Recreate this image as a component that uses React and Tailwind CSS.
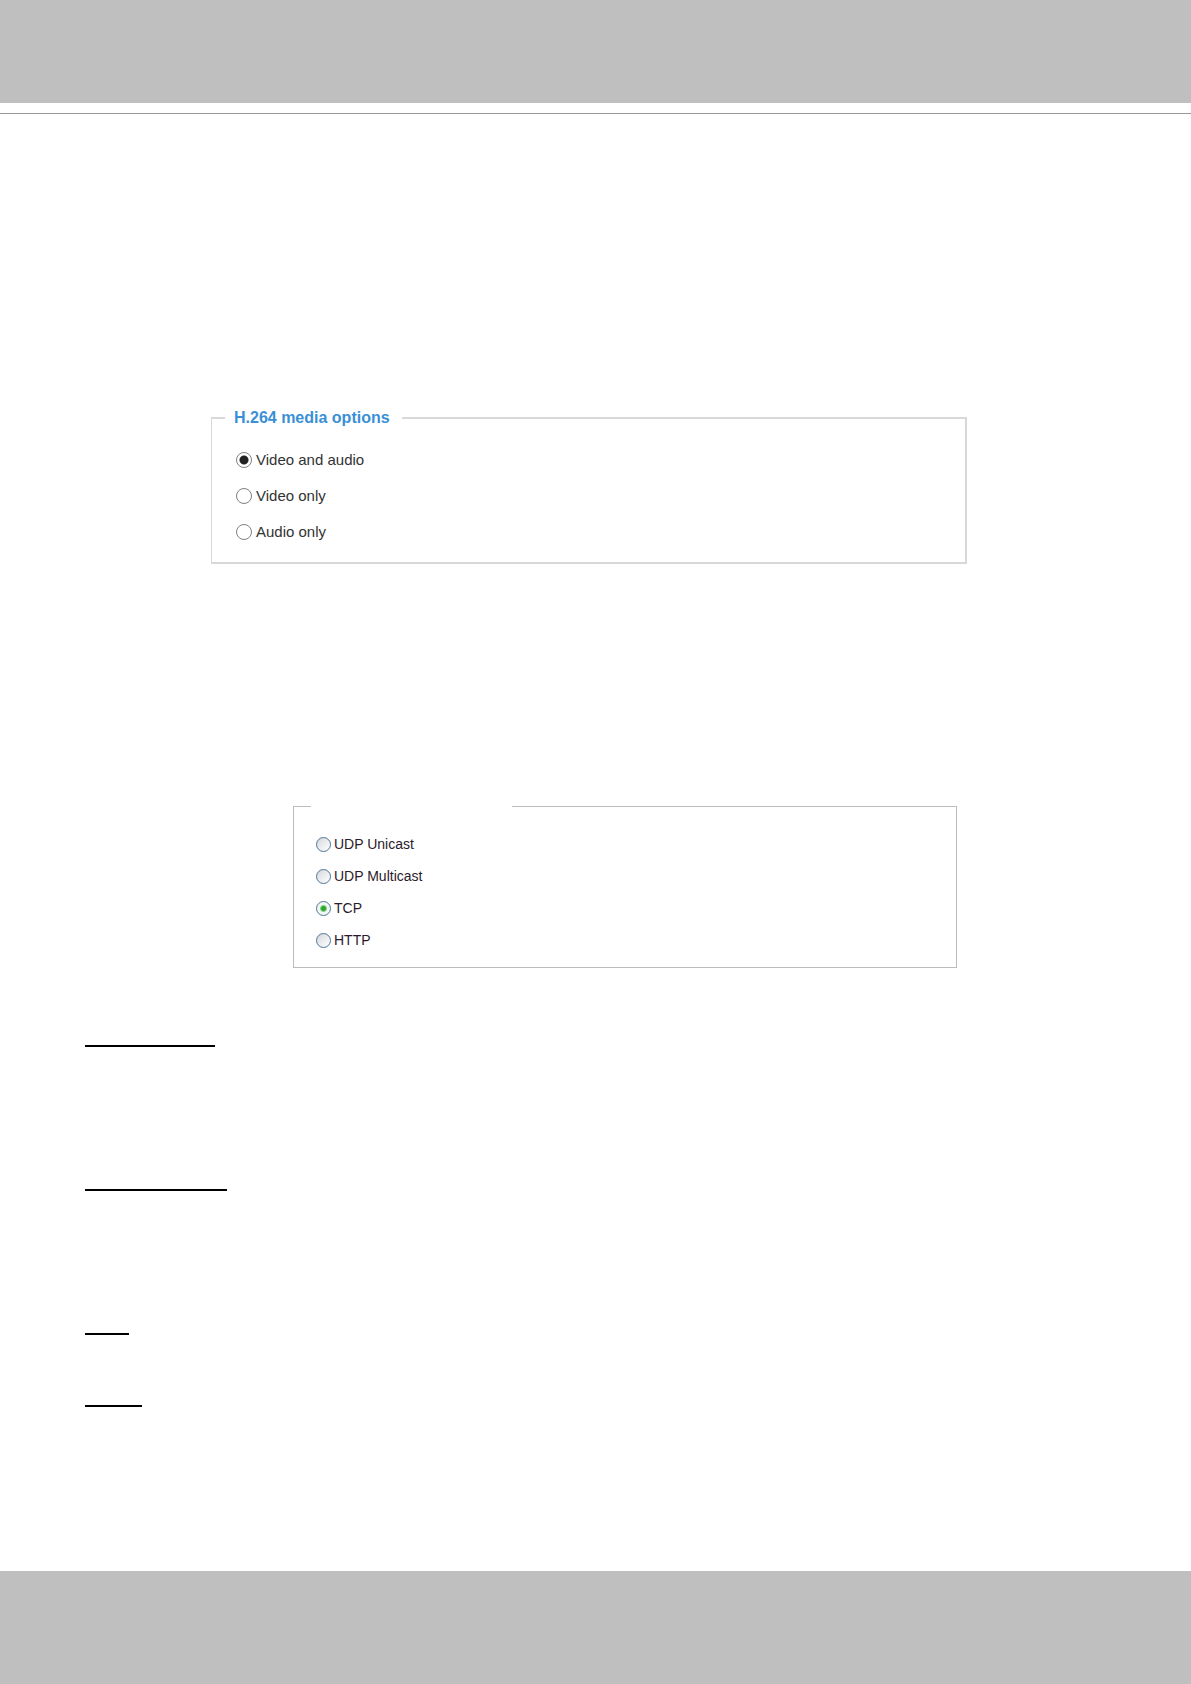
import React from "react";

const mediaOptions = ["Video and audio", "Video only", "Audio only"];
const protocols = ["UDP Unicast", "UDP Multicast", "TCP", "HTTP"];

function MediaOptions() {
  const [media, setMedia] = React.useState("Video and audio");

  return (
    <fieldset className="ml-[211px] mr-[224px] border-2 border-l border-[#d8d8d8] py-3">
      <legend className="ml-[13px] pl-[9px] pr-3 text-[16px] leading-6 font-bold text-[#3a8fd6]">
        H.264 media options
      </legend>
      {mediaOptions.map((option) => (
        <label
          key={option}
          className="ml-6 flex h-9 w-fit items-center gap-1 text-[15px] text-[#333]"
        >
          <input
            type="radio"
            name="media"
            className="size-4 appearance-none rounded-full border border-[#808080] bg-white checked:bg-[radial-gradient(circle,#222_4px,#fff_5px)]"
            checked={media === option}
            onChange={() => setMedia(option)}
          />
          {option}
        </label>
      ))}
    </fieldset>
  );
}

function ProtocolOptions() {
  const [protocol, setProtocol] = React.useState("TCP");

  return (
    <fieldset
      aria-label="Protocol"
      className="mt-[230px] ml-[293px] mr-[234px] border border-[#bcbcbc] pt-[10px] pb-[11px]"
    >
      {/* blank legend keeps the gap in the top border */}
      <legend className="ml-[17px] h-6 w-[201px]" />
      {protocols.map((option) => (
        <label
          key={option}
          className="ml-[22px] flex h-8 w-fit items-center gap-[3px] text-[14px] text-[#2b1a2b]"
        >
          <input
            type="radio"
            name="protocol"
            className="size-[15px] appearance-none rounded-full border border-[#4f7596] bg-linear-to-br from-[#d5d9dc] to-white checked:bg-[radial-gradient(circle,#2fa82f_2px,#f3f7f3_4px)]"
            checked={protocol === option}
            onChange={() => setProtocol(option)}
          />
          {option}
        </label>
      ))}
    </fieldset>
  );
}

function App() {
  return (
    <div className="flex min-h-screen flex-col bg-white font-['Liberation_Sans',Arial,sans-serif]">
      <header className="h-[103px] bg-[#bfbfbf]" />
      <hr className="mt-[10px] border-t border-[#999]" />
      <main className="flex-1 pt-[292px] pb-40">
        <MediaOptions />
        <ProtocolOptions />
        <div className="mt-[77px] ml-[85px]">
          <hr className="w-[130px] border-t-2 border-black" />
          <hr className="mt-[142px] w-[142px] border-t-2 border-black" />
          <hr className="mt-[142px] w-11 border-t-2 border-black" />
          <hr className="mt-[70px] w-[57px] border-t-2 border-black" />
        </div>
      </main>
      <footer className="h-[113px] bg-[#bfbfbf]" />
    </div>
  );
}

export default App;
